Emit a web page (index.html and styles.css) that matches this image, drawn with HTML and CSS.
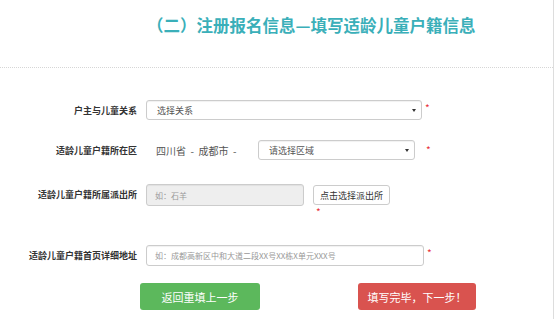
FILE: index.html
```html
<!DOCTYPE html>
<html>
<head>
    <title>注册报名信息</title>
    <meta charset="UTF-8">
    <meta name="viewport" content="width=device-width, initial-scale=1.0">
    <link rel="stylesheet" href="styles.css">
</head>
<body>
    <div class="page">
        <h2 class="title">（二）注册报名信息—填写适龄儿童户籍信息</h2>
        <div class="divider"></div>

        <form class="reg-form">
            <div class="row row-relation">
                <label class="label">户主与儿童关系</label>
                <div class="field">
                    <div class="select select-wide">
                        <span>选择关系</span>
                        <span class="caret"></span>
                    </div>
                    <span class="req">*</span>
                </div>
            </div>

            <div class="row row-area">
                <label class="label">适龄儿童户籍所在区</label>
                <div class="field">
                    <span class="static">四川省&nbsp; -&nbsp; 成都市&nbsp; -</span>
                    <div class="select select-area">
                        <span>请选择区域</span>
                        <span class="caret"></span>
                    </div>
                    <span class="req req-area">*</span>
                </div>
            </div>

            <div class="row row-police">
                <label class="label label-top">适龄儿童户籍所属派出所</label>
                <div class="field field-top">
                    <input class="input input-disabled" type="text" placeholder="如：石羊" disabled>
                    <div class="pick">
                        <button type="button" class="btn-pick">点击选择派出所</button>
                        <span class="req req-under">*</span>
                    </div>
                </div>
            </div>

            <div class="row row-address">
                <label class="label">适龄儿童户籍首页详细地址</label>
                <div class="field">
                    <input class="input input-wide" type="text" placeholder="如：成都高新区中和大道二段XX号XX栋X单元XXX号">
                    <span class="req">*</span>
                </div>
            </div>

            <div class="actions">
                <button type="button" class="btn btn-back">返回重填上一步</button>
                <button type="submit" class="btn btn-next">填写完毕，下一步！</button>
            </div>
        </form>
    </div>
</body>
</html>
```

FILE: styles.css
```css
body {
    margin: 0;
    background-color: #fff;
    font-family: "Noto Sans CJK SC", "Liberation Sans", sans-serif;
    color: #333;
}
.page {
    width: 553px;
    height: 319px;
    border-right: 1px solid #ddd;
    overflow: hidden;
}
.title {
    margin: 0;
    padding: 13px 0 0 147px;
    font-size: 16.5px;
    line-height: 24px;
    font-weight: bold;
    color: #3aafb9;
}
.divider {
    margin-top: 30px;
    border-top: 1px dotted #d6d6d6;
}
.reg-form {
    padding-top: 32px;
}
.row {
    display: flex;
    align-items: center;
}
.label {
    width: 137px;
    padding-right: 9px;
    text-align: right;
    font-size: 9px;
    font-weight: bold;
    color: #333;
    flex-shrink: 0;
}
.label-top {
    line-height: 22px;
}
.field {
    display: flex;
    align-items: center;
    font-size: 9px;
}
.field-top {
    align-items: flex-start;
}
.select {
    display: flex;
    align-items: center;
    justify-content: space-between;
    box-sizing: border-box;
    height: 20px;
    padding: 0 5px 0 10px;
    border: 1px solid #ccc;
    border-radius: 3px;
    box-shadow: inset 0 1px 1px rgba(0, 0, 0, 0.06);
    color: #555;
    font-size: 9px;
}
.select-wide {
    width: 276px;
}
.select-area {
    width: 157px;
}
.caret {
    width: 0;
    height: 0;
    border-left: 2px solid transparent;
    border-right: 2px solid transparent;
    border-top: 3px solid #333;
}
.req {
    align-self: flex-start;
    margin-top: 3px;
    margin-left: 3px;
    color: #e8303a;
    font-size: 10px;
    line-height: 10px;
}
.req-area {
    margin-left: 11px;
    margin-top: 5px;
}
.static {
    width: 112px;
    padding-left: 10px;
    box-sizing: border-box;
    color: #555;
    font-size: 10px;
}
.input {
    box-sizing: border-box;
    height: 22px;
    padding: 0 8px;
    border: 1px solid #ccc;
    border-radius: 3px;
    box-shadow: inset 0 1px 1px rgba(0, 0, 0, 0.06);
    font-family: inherit;
    font-size: 8px;
    color: #555;
    background-color: #fff;
}
.input::placeholder {
    color: #999;
}
.input-disabled {
    width: 158px;
    background-color: #eee;
}
.input-wide {
    width: 278px;
    height: 21px;
}
.pick {
    display: flex;
    flex-direction: column;
    align-items: flex-start;
    margin-left: 9px;
    margin-top: 1px;
}
.btn-pick {
    box-sizing: border-box;
    height: 20px;
    padding: 0 6px;
    border: 1px solid #ccc;
    border-radius: 3px;
    background-color: #fff;
    font-family: inherit;
    font-size: 9px;
    color: #333;
}
.req-under {
    margin: 2px 0 0 3px;
    height: 10px;
}
.row-relation {
    height: 20px;
}
.row-area {
    margin-top: 20px;
    height: 20px;
}
.row-police {
    margin-top: 24px;
    align-items: flex-start;
}
.row-address {
    margin-top: 28px;
}
.actions {
    display: flex;
    margin-top: 17px;
    padding-left: 140px;
}
.btn {
    height: 27px;
    border: 0;
    border-radius: 3px;
    font-family: inherit;
    font-size: 11px;
    color: #fff;
}
.btn-back {
    width: 120px;
    background-color: #5cb85c;
}
.btn-next {
    width: 118px;
    margin-left: 98px;
    background-color: #d9534f;
}
```
